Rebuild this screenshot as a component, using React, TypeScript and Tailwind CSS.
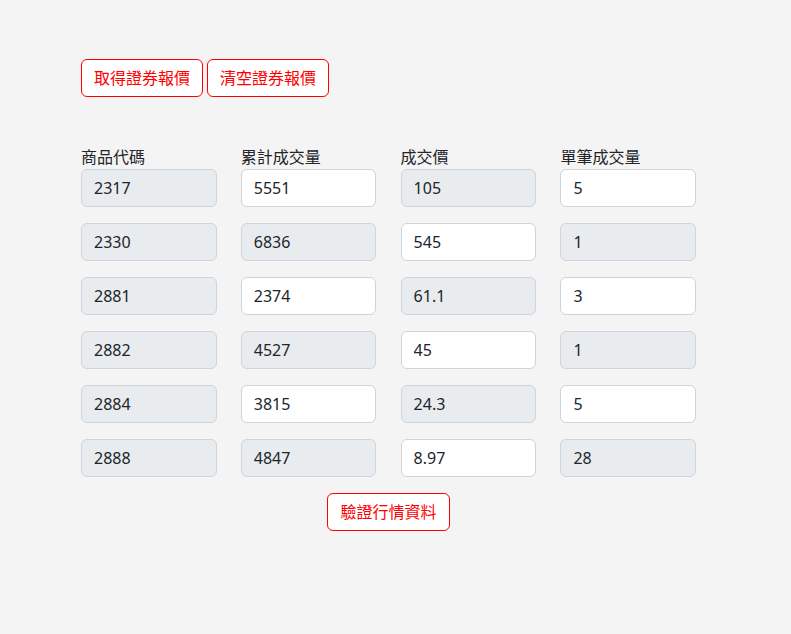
import React from 'react';

interface QuoteRow {
  code: string;
  volume: string;
  price: string;
  lot: string;
}

const rows: QuoteRow[] = [
  { code: '2317', volume: '5551', price: '105', lot: '5' },
  { code: '2330', volume: '6836', price: '545', lot: '1' },
  { code: '2881', volume: '2374', price: '61.1', lot: '3' },
  { code: '2882', volume: '4527', price: '45', lot: '1' },
  { code: '2884', volume: '3815', price: '24.3', lot: '5' },
  { code: '2888', volume: '4847', price: '8.97', lot: '28' },
];

const labels = ['商品代碼', '累計成交量', '成交價', '單筆成交量'];

const Field = ({ value, readOnly }: { value: string; readOnly: boolean }) => (
  <input
    value={value}
    readOnly
    className={
      'block w-[135.5px] h-[38px] px-3 text-[16px] leading-6 text-[#212529] border border-[#ced4da] rounded-md outline-none ' +
      (readOnly ? 'bg-[#e9ecef]' : 'bg-white')
    }
  />
);

const RedButton = ({ children }: { children: React.ReactNode }) => (
  <button className="h-[38px] px-3 text-[16px] leading-6 text-[#ff0000] bg-white border border-[#ff0000] rounded-md">
    {children}
  </button>
);

const App = () => {
  return (
    <div
      className="min-h-[634px] bg-[#f4f4f4] pt-[59px] pl-[81px]"
      style={{ fontFamily: '"Noto Sans", "Noto Sans CJK TC", sans-serif' }}
    >
      <div className="flex gap-1">
        <RedButton>取得證券報價</RedButton>
        <RedButton>清空證券報價</RedButton>
      </div>

      <div className="w-[615px] mt-[48px]">
        <div className="flex flex-col gap-4">
          {rows.map((row, i) => {
            const even = i % 2 === 0;
            const cells = [
              { value: row.code, readOnly: true },
              { value: row.volume, readOnly: !even },
              { value: row.price, readOnly: even },
              { value: row.lot, readOnly: !even },
            ];
            return (
              <div key={row.code} className="flex gap-[24.3px]">
                {cells.map((cell, j) => (
                  <div key={j}>
                    {i === 0 && (
                      <label className="block text-[16px] leading-6 text-[#212529]">{labels[j]}</label>
                    )}
                    <Field value={cell.value} readOnly={cell.readOnly} />
                  </div>
                ))}
              </div>
            );
          })}
        </div>

        <div className="flex justify-center mt-4">
          <RedButton>驗證行情資料</RedButton>
        </div>
      </div>
    </div>
  );
};

export default App;
